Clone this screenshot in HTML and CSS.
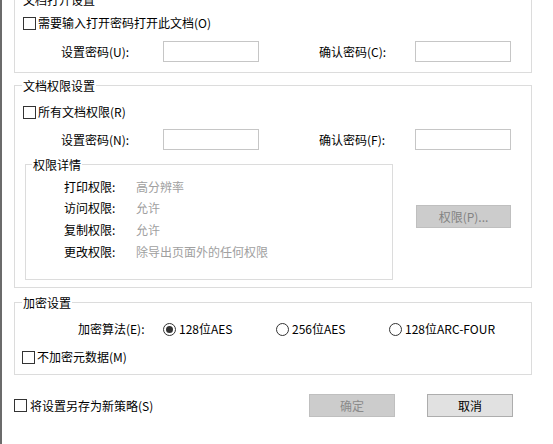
FILE: index.html
```html
<!DOCTYPE html>
<html lang="zh-CN">
<head>
<meta charset="utf-8">
<title>安全设置</title>
<link rel="stylesheet" href="styles.css">
</head>
<body>
<div class="dialog">
  <section class="group g-open">
    <span class="title">文档打开设置</span>
    <div class="row check-row"><span class="box"></span><span>需要输入打开密码打开此文档(O)</span></div>
    <div class="row pw-row">
      <span class="pw-label">设置密码(U):</span><span class="input"></span>
      <span class="pw-label second">确认密码(C):</span><span class="input"></span>
    </div>
  </section>

  <section class="group g-perm">
    <span class="title">文档权限设置</span>
    <div class="row check-row"><span class="box"></span><span>所有文档权限(R)</span></div>
    <div class="row pw-row">
      <span class="pw-label">设置密码(N):</span><span class="input"></span>
      <span class="pw-label second">确认密码(F):</span><span class="input"></span>
    </div>
    <div class="detail-wrap">
      <div class="detail">
        <span class="title inner">权限详情</span>
        <div class="drow"><span class="dlabel">打印权限:</span><span class="dval">高分辨率</span></div>
        <div class="drow"><span class="dlabel">访问权限:</span><span class="dval">允许</span></div>
        <div class="drow"><span class="dlabel">复制权限:</span><span class="dval">允许</span></div>
        <div class="drow"><span class="dlabel">更改权限:</span><span class="dval">除导出页面外的任何权限</span></div>
      </div>
      <div class="btn perm-btn">权限(P)...</div>
    </div>
  </section>

  <section class="group g-enc">
    <span class="title">加密设置</span>
    <div class="row algo-row">
      <span class="algo-label">加密算法(E):</span>
      <span class="radio"><span class="dot on"></span>128位AES</span>
      <span class="radio"><span class="dot"></span>256位AES</span>
      <span class="radio"><span class="dot"></span>128位ARC-FOUR</span>
    </div>
    <div class="row check-row meta-row"><span class="box"></span><span>不加密元数据(M)</span></div>
  </section>

  <div class="row footer">
    <div class="row save-check"><span class="box"></span><span>将设置另存为新策略(S)</span></div>
    <div class="btn btn-disabled">确定</div>
    <div class="btn btn-cancel">取消</div>
  </div>
</div>
</body>
</html>
```

FILE: styles.css
```css
* { box-sizing: border-box; }

html, body { margin: 0; }

body {
  height: 100vh;
  overflow: hidden;
  background: #fff;
  color: #000;
  font-family: "Noto Sans CJK SC", "Microsoft YaHei", sans-serif;
  font-size: 12px;
  line-height: 16px;
  border-left: 2px solid #6b6b6b;
  padding-left: 12px;
}

.dialog { width: 518px; }

.row { display: flex; align-items: center; }

.group {
  position: relative;
  border: 1px solid #dcdcdc;
}

.title {
  position: absolute;
  top: -8px;
  left: 7px;
  padding: 0 1px;
  background: #fff;
  white-space: nowrap;
}

.title.inner { left: 6px; }

.box {
  flex: none;
  width: 13px;
  height: 13px;
  border: 1px solid #333;
  background: #fff;
  margin-right: 2px;
}

.check-row { height: 20px; padding-left: 8px; }

.pw-row { height: 21px; margin-top: 8px; padding-left: 46px; }

.pw-label { flex: none; width: 102px; white-space: nowrap; }
.pw-label.second { width: 96px; margin-left: 60px; }

.input {
  flex: none;
  width: 96px;
  height: 21px;
  border: 1px solid #c6c6c6;
  background: #fff;
}

/* group 1 */
.g-open { margin-top: -1px; padding: 13px 0 10px; }

/* group 2 */
.g-perm { margin-top: 12px; padding: 16px 0 7px; }
.g-perm .pw-row { margin-top: 7px; }

.detail-wrap {
  display: flex;
  align-items: flex-start;
  margin: 14px 0 0 10px;
}

.detail {
  position: relative;
  flex: none;
  width: 368px;
  height: 116px;
  border: 1px solid #dcdcdc;
  padding: 11px 0 0 38px;
}

.drow { display: flex; align-items: center; height: 21.67px; }
.dlabel { width: 72px; flex: none; }
.dval { color: #a0a0a0; white-space: nowrap; }

.btn {
  flex: none;
  display: flex;
  align-items: center;
  justify-content: center;
  width: 86px;
  height: 23px;
}

.perm-btn {
  width: 95px;
  margin: 41px 0 0 23px;
  background: #cccccc;
  border: 1px solid #bfbfbf;
  color: #838383;
}

/* group 3 */
.g-enc { margin-top: 14px; padding: 16px 0 7px; }

.algo-row { height: 20px; padding-left: 63px; }
.algo-label { width: 85px; flex: none; white-space: nowrap; }

.radio { display: flex; align-items: center; width: 113px; flex: none; white-space: nowrap; }

.dot {
  flex: none;
  display: flex;
  align-items: center;
  justify-content: center;
  width: 13px;
  height: 13px;
  border: 1px solid #333;
  border-radius: 50%;
  margin-right: 3px;
  background: #fff;
}

.dot.on::after {
  content: "";
  width: 7px;
  height: 7px;
  border-radius: 50%;
  background: #333;
}

.meta-row { margin-top: 8px; padding-left: 7px; }

/* footer */
.footer { height: 23px; margin-top: 19px; }

.save-check { flex: 1; }
.save-check .box { margin-right: 3px; }

.btn-disabled {
  background: #cccccc;
  border: 1px solid #bfbfbf;
  color: #8a8a8a;
}

.btn-cancel {
  margin: 0 19px 0 32px;
  background: #e1e1e1;
  border: 1px solid #adadad;
}
```
